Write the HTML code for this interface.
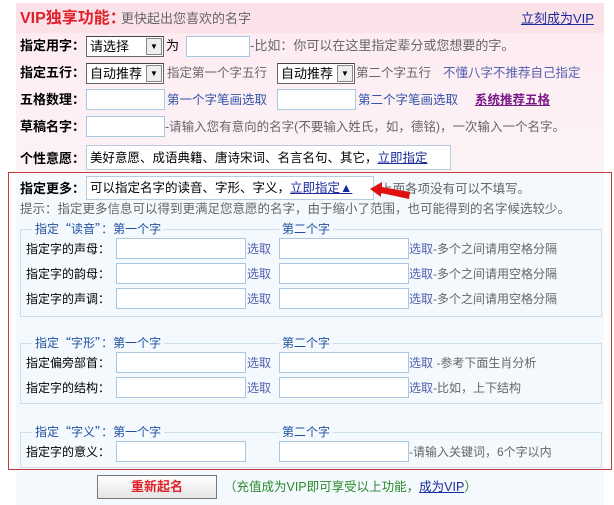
<!DOCTYPE html><html><head><meta charset="utf-8"><style>
*{margin:0;padding:0;box-sizing:border-box}
body{width:614px;height:505px;background:#fff;font-family:"Liberation Sans","Noto Sans CJK SC",sans-serif;font-size:12px;color:#333;position:relative;overflow:hidden}
.a{position:absolute;white-space:nowrap;line-height:16px}
.b{font-weight:bold;color:#000;font-size:13px}
.g{color:#666}
.bl{color:#3355aa}
.in{position:absolute;background:#fff;border:1px solid #a9c7e3;height:21px}
.sel{position:absolute;background:#fff;border:1px solid #666;border-top-color:#444;height:21px;font-size:13px;line-height:19px;padding-left:3px;color:#000}
.sel i{position:absolute;right:1px;top:1px;width:16px;height:17px;border:1px solid #888;background:#eee;font-style:normal;font-size:8px;text-align:center;line-height:16px}
.fs{position:absolute;border:1px solid #cddfe9;left:20px;width:582px}
.lg{position:absolute;color:#2050a0;background:#f3f9fd;padding:0 3px;line-height:16px;font-size:12px}
.q{font-family:"Noto Sans CJK SC",sans-serif}
u{text-decoration:underline}
</style></head><body>
<div style="position:absolute;left:16px;top:3px;width:588px;height:169px;background:linear-gradient(#fde9ef,#fdf0f4 60%,#fbf2f5)"></div>
<div style="position:absolute;left:16px;top:3px;width:588px;height:30px;background:#fbe1e8"></div>
<div style="position:absolute;left:16px;top:172px;width:588px;height:333px;background:#f3f9fd"></div>
<div style="position:absolute;left:8px;top:172px;width:604px;height:298px;border:1px solid #c83a3a"></div>

<div class="a" style="left:20px;top:9px;font-size:16px;font-weight:bold;color:#e0202a;line-height:20px">VIP独享功能：</div>
<div class="a g" style="left:121px;top:11px;font-size:13px">更快起出您喜欢的名字</div>
<div class="a" style="left:521px;top:11px;font-size:13px;color:#1a2a9a"><u>立刻成为VIP</u></div>

<div class="a b" style="left:20px;top:38px">指定用字：</div>
<div class="sel" style="left:86px;top:36px;width:78px">请选择<i>▼</i></div>
<div class="a" style="left:166px;top:38px;color:#000;font-size:13px">为</div>
<div class="in" style="left:186px;top:36px;width:64px"></div>
<div class="a g" style="left:250px;top:38px;font-size:13px">-比如：你可以在这里指定辈分或您想要的字。</div>

<div class="a b" style="left:20px;top:65px">指定五行：</div>
<div class="sel" style="left:86px;top:63px;width:78px">自动推荐<i>▼</i></div>
<div class="a g" style="left:167px;top:65px;font-size:12.5px">指定第一个字五行</div>
<div class="sel" style="left:277px;top:63px;width:78px">自动推荐<i>▼</i></div>
<div class="a g" style="left:356px;top:65px;font-size:12.5px">第二个字五行</div>
<div class="a" style="left:443px;top:65px;color:#5560b0;font-size:12.5px">不懂八字不推荐自己指定</div>

<div class="a b" style="left:20px;top:92px">五格数理：</div>
<div class="in" style="left:86px;top:89px;width:79px"></div>
<div class="a bl" style="left:167px;top:92px;font-size:12.5px">第一个字笔画选取</div>
<div class="in" style="left:277px;top:89px;width:79px"></div>
<div class="a bl" style="left:358px;top:92px;font-size:12.5px">第二个字笔画选取</div>
<div class="a" style="left:475px;top:92px;color:#7a1a8a;font-weight:bold;font-size:12.5px"><u>系统推荐五格</u></div>

<div class="a b" style="left:20px;top:119px">草稿名字：</div>
<div class="in" style="left:86px;top:116px;width:79px"></div>
<div class="a g" style="left:165px;top:119px;font-size:12.5px">-请输入您有意向的名字(不要输入姓氏，如，德铭)，一次输入一个名字。</div>

<div class="a b" style="left:20px;top:151px">个性意愿：</div>
<div class="in" style="left:86px;top:145px;width:365px;height:25px;border-color:#b6cde0"></div>
<div class="a" style="left:90px;top:150px;color:#000;font-size:12.5px">美好意愿、成语典籍、唐诗宋词、名言名句、其它，<u style="color:#1a2a9a">立即指定</u></div>

<div class="a b" style="left:20px;top:181px">指定更多：</div>
<div class="in" style="left:86px;top:176px;width:288px;height:24px;border-color:#b6cde0"></div>
<div class="a" style="left:90px;top:180px;color:#000;font-size:12.5px">可以指定名字的读音、字形、字义，<u style="color:#1a2a9a">立即指定▲</u></div>
<div class="a g" style="left:376px;top:181px;font-size:12.5px">-上面各项没有可以不填写。</div>
<svg style="position:absolute;left:360px;top:180px" width="60" height="25"><polygon points="10,9 22,2 22,7 50,12 49,19 21,13 21,17" fill="#e01010"/></svg>
<div class="a g" style="left:20px;top:201px;font-size:12.5px">提示：指定更多信息可以得到更满足您意愿的名字，由于缩小了范围，也可能得到的名字候选较少。</div>

<div class="fs" style="top:229px;height:88px"></div>
<div class="lg" style="left:32px;top:221px">指定<span class="q">“</span>读音<span class="q">”</span>：第一个字</div>
<div class="lg" style="left:279px;top:221px">第二个字</div>
<div class="fs" style="top:343px;height:61px"></div>
<div class="lg" style="left:32px;top:335px">指定<span class="q">“</span>字形<span class="q">”</span>：第一个字</div>
<div class="lg" style="left:279px;top:335px">第二个字</div>
<div class="fs" style="top:432px;height:36px"></div>
<div class="lg" style="left:32px;top:424px">指定<span class="q">“</span>字义<span class="q">”</span>：第一个字</div>
<div class="lg" style="left:279px;top:424px">第二个字</div>

<div class="a" style="left:26px;top:241px;color:#000">指定字的声母：</div>
<div class="in" style="left:116px;top:238px;width:130px"></div><div class="a" style="left:247px;top:241px;color:#5560b0">选取</div>
<div class="in" style="left:279px;top:238px;width:130px"></div><div class="a g" style="left:409px;top:241px"><span style="color:#5560b0">选取</span>-多个之间请用空格分隔</div>
<div class="a" style="left:26px;top:266px;color:#000">指定字的韵母：</div>
<div class="in" style="left:116px;top:263px;width:130px"></div><div class="a" style="left:247px;top:266px;color:#5560b0">选取</div>
<div class="in" style="left:279px;top:263px;width:130px"></div><div class="a g" style="left:409px;top:266px"><span style="color:#5560b0">选取</span>-多个之间请用空格分隔</div>
<div class="a" style="left:26px;top:291px;color:#000">指定字的声调：</div>
<div class="in" style="left:116px;top:288px;width:130px"></div><div class="a" style="left:247px;top:291px;color:#5560b0">选取</div>
<div class="in" style="left:279px;top:288px;width:130px"></div><div class="a g" style="left:409px;top:291px"><span style="color:#5560b0">选取</span>-多个之间请用空格分隔</div>

<div class="a" style="left:26px;top:355px;color:#000">指定偏旁部首：</div>
<div class="in" style="left:116px;top:352px;width:130px"></div><div class="a" style="left:247px;top:355px;color:#5560b0">选取</div>
<div class="in" style="left:279px;top:352px;width:130px"></div><div class="a g" style="left:409px;top:355px"><span style="color:#5560b0">选取</span> -参考下面生肖分析</div>
<div class="a" style="left:26px;top:380px;color:#000">指定字的结构：</div>
<div class="in" style="left:116px;top:377px;width:130px"></div><div class="a" style="left:247px;top:380px;color:#5560b0">选取</div>
<div class="in" style="left:279px;top:377px;width:130px"></div><div class="a g" style="left:409px;top:380px"><span style="color:#5560b0">选取</span>-比如，上下结构</div>

<div class="a" style="left:26px;top:444px;color:#000">指定字的意义：</div>
<div class="in" style="left:116px;top:441px;width:130px"></div>
<div class="in" style="left:279px;top:441px;width:130px"></div><div class="a g" style="left:409px;top:444px">-请输入关键词，6个字以内</div>

<div style="position:absolute;left:97px;top:475px;width:120px;height:24px;border:1px solid #777;background:linear-gradient(#fff,#e4e4e4);text-align:center;line-height:22px;color:#e0202a;font-weight:bold;font-size:13px">重新起名</div>
<div class="a" style="left:224px;top:479px;color:#2a8a2a;font-size:12.5px">（充值成为VIP即可享受以上功能，<u style="color:#1a2a9a">成为VIP</u>）</div>
</body></html>
